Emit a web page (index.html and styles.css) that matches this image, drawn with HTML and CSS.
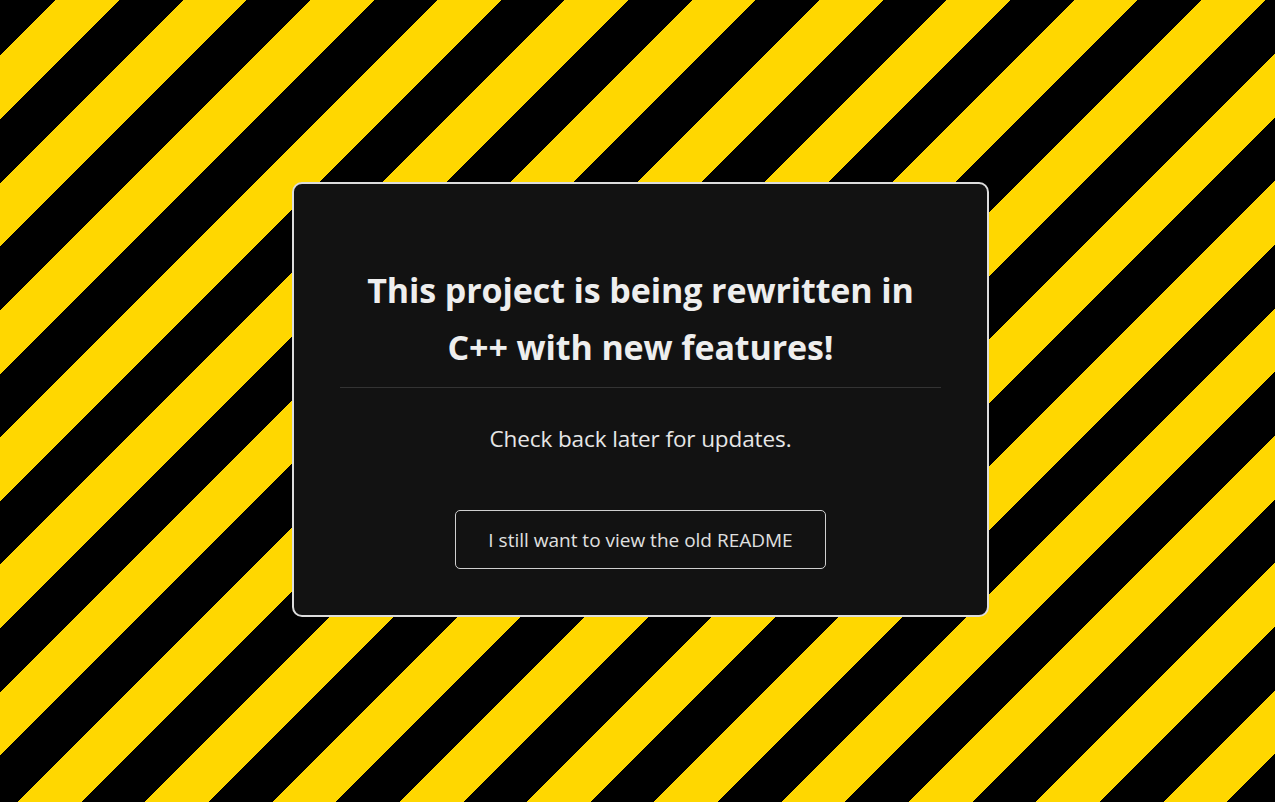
FILE: index.html
```html
<!DOCTYPE html>
<html lang="en">
<head>
<meta charset="utf-8">
<title>Rewrite in progress</title>
<link rel="stylesheet" href="styles.css">
</head>
<body>
<div class="page">
  <div class="card">
    <h1 class="title">This project is being rewritten in C++ with new features!</h1>
    <p class="message">Check back later for updates.</p>
    <button class="readme-btn" type="button">I still want to view the old README</button>
  </div>
</div>
</body>
</html>
```

FILE: styles.css
```css
html, body {
  margin: 0;
  padding: 0;
  height: 100%;
}

body {
  font-family: "Open Sans", "Noto Sans", sans-serif;
}

.page {
  min-height: 100vh;
  box-sizing: border-box;
  display: flex;
  align-items: center;
  justify-content: center;
  padding-left: 6px;
  padding-bottom: 3px;
  background: repeating-linear-gradient(135deg,
    #000 0 39.5px,
    #ffd700 39.5px 84.5px,
    #000 84.5px 90px);
}

.card {
  width: 697px;
  box-sizing: border-box;
  background: #121212;
  border: 2px solid #dcdcdc;
  border-radius: 10px;
  padding: 78px 46px 46px;
  display: flex;
  flex-direction: column;
  align-items: center;
  text-align: center;
}

.title {
  margin: 0;
  width: 100%;
  padding: 0 20px 11px;
  box-sizing: border-box;
  border-bottom: 1px solid #333;
  font-size: 34px;
  line-height: 57px;
  font-weight: 700;
  color: #eeeeee;
  letter-spacing: -0.1px;
}

.message {
  margin: 36px 0 0;
  font-size: 22.5px;
  line-height: 30px;
  color: #e6e6e6;
  letter-spacing: -0.1px;
}

.readme-btn {
  margin-top: 56px;
  width: 371px;
  height: 59px;
  background: transparent;
  border: 1px solid #cfcfcf;
  border-radius: 5px;
  font-family: inherit;
  font-size: 19px;
  color: #e0e0e0;
  cursor: pointer;
}
```
